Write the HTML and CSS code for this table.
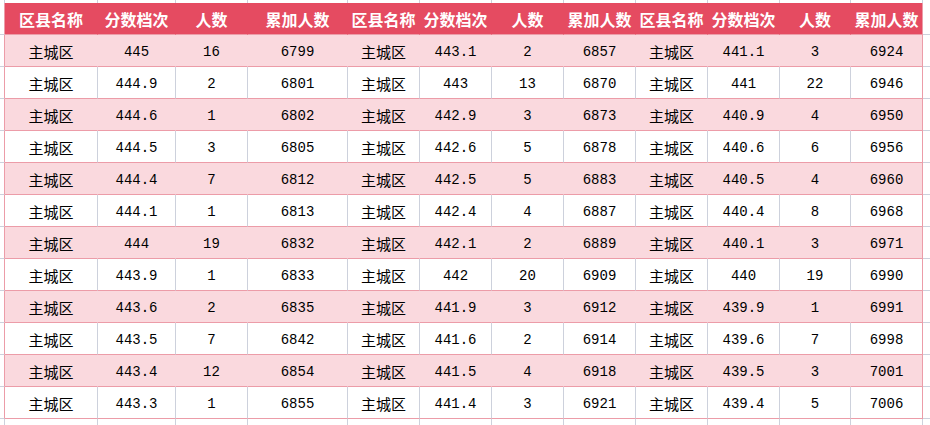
FILE: index.html
```html
<!DOCTYPE html>
<html lang="zh-CN">
<head>
<meta charset="utf-8">
<title>分数档次</title>
<link rel="stylesheet" href="styles.css">
</head>
<body>
<table class="sheet">
  <colgroup>
    <col><col><col><col><col><col><col><col><col><col><col><col><col><col>
  </colgroup>
  <tbody>
    <tr class="edge edge-top"><td></td><td></td><td></td><td></td><td></td><td></td><td></td><td></td><td></td><td></td><td></td><td></td><td></td><td></td></tr>
    <tr class="head">
      <td></td>
      <th>区县名称</th><th>分数档次</th><th>人数</th><th>累加人数</th>
      <th>区县名称</th><th>分数档次</th><th>人数</th><th>累加人数</th>
      <th>区县名称</th><th>分数档次</th><th>人数</th><th>累加人数</th>
      <td></td>
    </tr>
    <tr class="pink"><td></td><td>主城区</td><td class="num">445</td><td class="num">16</td><td class="num">6799</td><td>主城区</td><td class="num">443.1</td><td class="num">2</td><td class="num">6857</td><td>主城区</td><td class="num">441.1</td><td class="num">3</td><td class="num">6924</td><td></td></tr>
    <tr class="plain"><td></td><td>主城区</td><td class="num">444.9</td><td class="num">2</td><td class="num">6801</td><td>主城区</td><td class="num">443</td><td class="num">13</td><td class="num">6870</td><td>主城区</td><td class="num">441</td><td class="num">22</td><td class="num">6946</td><td></td></tr>
    <tr class="pink"><td></td><td>主城区</td><td class="num">444.6</td><td class="num">1</td><td class="num">6802</td><td>主城区</td><td class="num">442.9</td><td class="num">3</td><td class="num">6873</td><td>主城区</td><td class="num">440.9</td><td class="num">4</td><td class="num">6950</td><td></td></tr>
    <tr class="plain"><td></td><td>主城区</td><td class="num">444.5</td><td class="num">3</td><td class="num">6805</td><td>主城区</td><td class="num">442.6</td><td class="num">5</td><td class="num">6878</td><td>主城区</td><td class="num">440.6</td><td class="num">6</td><td class="num">6956</td><td></td></tr>
    <tr class="pink"><td></td><td>主城区</td><td class="num">444.4</td><td class="num">7</td><td class="num">6812</td><td>主城区</td><td class="num">442.5</td><td class="num">5</td><td class="num">6883</td><td>主城区</td><td class="num">440.5</td><td class="num">4</td><td class="num">6960</td><td></td></tr>
    <tr class="plain"><td></td><td>主城区</td><td class="num">444.1</td><td class="num">1</td><td class="num">6813</td><td>主城区</td><td class="num">442.4</td><td class="num">4</td><td class="num">6887</td><td>主城区</td><td class="num">440.4</td><td class="num">8</td><td class="num">6968</td><td></td></tr>
    <tr class="pink"><td></td><td>主城区</td><td class="num">444</td><td class="num">19</td><td class="num">6832</td><td>主城区</td><td class="num">442.1</td><td class="num">2</td><td class="num">6889</td><td>主城区</td><td class="num">440.1</td><td class="num">3</td><td class="num">6971</td><td></td></tr>
    <tr class="plain"><td></td><td>主城区</td><td class="num">443.9</td><td class="num">1</td><td class="num">6833</td><td>主城区</td><td class="num">442</td><td class="num">20</td><td class="num">6909</td><td>主城区</td><td class="num">440</td><td class="num">19</td><td class="num">6990</td><td></td></tr>
    <tr class="pink"><td></td><td>主城区</td><td class="num">443.6</td><td class="num">2</td><td class="num">6835</td><td>主城区</td><td class="num">441.9</td><td class="num">3</td><td class="num">6912</td><td>主城区</td><td class="num">439.9</td><td class="num">1</td><td class="num">6991</td><td></td></tr>
    <tr class="plain"><td></td><td>主城区</td><td class="num">443.5</td><td class="num">7</td><td class="num">6842</td><td>主城区</td><td class="num">441.6</td><td class="num">2</td><td class="num">6914</td><td>主城区</td><td class="num">439.6</td><td class="num">7</td><td class="num">6998</td><td></td></tr>
    <tr class="pink"><td></td><td>主城区</td><td class="num">443.4</td><td class="num">12</td><td class="num">6854</td><td>主城区</td><td class="num">441.5</td><td class="num">4</td><td class="num">6918</td><td>主城区</td><td class="num">439.5</td><td class="num">3</td><td class="num">7001</td><td></td></tr>
    <tr class="plain"><td></td><td>主城区</td><td class="num">443.3</td><td class="num">1</td><td class="num">6855</td><td>主城区</td><td class="num">441.4</td><td class="num">3</td><td class="num">6921</td><td>主城区</td><td class="num">439.4</td><td class="num">5</td><td class="num">7006</td><td></td></tr>
    <tr class="edge edge-bottom"><td></td><td></td><td></td><td></td><td></td><td></td><td></td><td></td><td></td><td></td><td></td><td></td><td></td><td></td></tr>
  </tbody>
</table>
</body>
</html>
```
FILE: styles.css
```css
html, body {
  margin: 0;
  padding: 0;
  background: #ffffff;
  overflow: hidden;
}

.sheet {
  border-collapse: separate;
  border-spacing: 0;
  table-layout: fixed;
  width: 930px;
  font-family: "Noto Sans CJK SC", "Noto Sans", sans-serif;
  font-size: 15px;
  color: #000000;
}

.sheet col:nth-child(1)  { width: 5px; }
.sheet col:nth-child(2)  { width: 93px; }
.sheet col:nth-child(3)  { width: 78px; }
.sheet col:nth-child(4)  { width: 72px; }
.sheet col:nth-child(5)  { width: 100px; }
.sheet col:nth-child(6)  { width: 72px; }
.sheet col:nth-child(7)  { width: 72px; }
.sheet col:nth-child(8)  { width: 72px; }
.sheet col:nth-child(9)  { width: 72px; }
.sheet col:nth-child(10) { width: 72px; }
.sheet col:nth-child(11) { width: 72px; }
.sheet col:nth-child(12) { width: 71px; }
.sheet col:nth-child(13) { width: 72px; }
.sheet col:nth-child(14) { width: 7px; }

.sheet td,
.sheet th {
  box-sizing: border-box;
  padding: 3px 0 0 0;
  margin: 0;
  line-height: 20px;
  text-align: center;
  white-space: nowrap;
  overflow: hidden;
  border-right: 1px solid #cdd1dc;
  border-bottom: 1px solid #ec9ca8;
}

.sheet tr { height: 32px; }

/* spreadsheet gridlines around the table */
.sheet .edge-top { height: 3px; }
.sheet .edge-bottom { height: 8px; }
.sheet .edge td {
  padding: 0;
  line-height: 0;
  border-bottom: none;
}
.sheet tr > td:first-child {
  padding: 0;
  border-right-color: #ec9ca8;
  border-bottom-color: #cdd1dc;
}
.sheet .edge > td:first-child { border-right-color: #cdd1dc; }
.sheet tr > td:last-child {
  padding: 0;
  border-right: none;
  border-bottom-color: #cdd1dc;
}
.sheet .edge > td:last-child { border-bottom: none; }

/* header */
.sheet .head th {
  background: #e54b61;
  color: #ffffff;
  font-weight: 700;
  font-size: 16px;
  padding-top: 0;
  border-right-color: #e54b61;
}

/* striped rows */
.sheet .pink td { background: #fad9de; border-right-color: #fad9de; }
.sheet .pink td:first-child,
.sheet .pink td:last-child { background: transparent; }
.sheet .pink td:first-child { border-right-color: #ec9ca8; }

.sheet .head > :nth-last-child(2),
.sheet .pink > td:nth-last-child(2),
.sheet .plain > td:nth-last-child(2) { border-right-color: #ec9ca8; }

.sheet .num {
  font-family: "Liberation Mono", "DejaVu Sans Mono", monospace;
  font-size: 14px;
}
```
